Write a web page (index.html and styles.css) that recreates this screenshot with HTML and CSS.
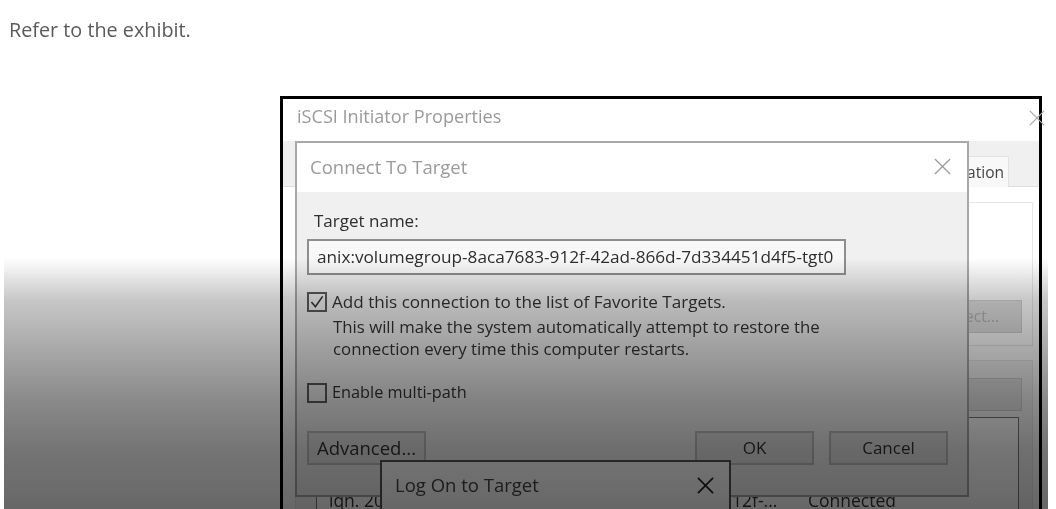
FILE: index.html
```html
<!DOCTYPE html>
<html lang="en">
<head>
    <meta charset="UTF-8">
    <meta name="viewport" content="width=device-width, initial-scale=1.0">
    <title>Refer to the exhibit</title>
    <link rel="stylesheet" href="styles.css">
</head>
<body>
    <p class="prompt">Refer to the exhibit.</p>

    <div class="exhibit">
        <!-- parent window, mostly covered by the dialogs -->
        <div class="window">
            <div class="window-title">iSCSI Initiator Properties</div>
            <svg class="window-x" viewBox="0 0 18 18"><path d="M1 1L17 17M17 1L1 17"/></svg>
            <div class="tabs"><span class="tab">Configuration</span></div>
            <div class="window-body">
                <div class="group group-top">
                    <div class="side-btn side-btn-top">Quick Connect...</div>
                </div>
                <div class="group group-bottom">
                    <div class="side-btn side-btn-low"></div>
                    <div class="target-list">
                        <span class="target-name">iqn. 20</span>
                        <span class="target-id">912f-...</span>
                        <span class="target-state">Connected</span>
                    </div>
                </div>
            </div>
        </div>

        <div class="dialog">
            <div class="dialog-head">
                <span class="dialog-title">Connect To Target</span>
                <svg class="dialog-x" viewBox="0 0 18 18"><path d="M1 1L17 17M17 1L1 17"/></svg>
            </div>
            <div class="dialog-body">
                <label class="field-label">Target name:</label>
                <div class="target-input">anix:volumegroup-8aca7683-912f-42ad-866d-7d334451d4f5-tgt0</div>
                <div class="check-row fav-row">
                    <span class="checkbox">
                        <svg viewBox="0 0 20 20"><path d="M3 10L8 16L17 3"/></svg>
                    </span>
                    <span>Add this connection to the list of Favorite Targets.</span>
                </div>
                <p class="check-note">This will make the system automatically attempt to restore the<br>connection every time this computer restarts.</p>
                <div class="check-row path-row">
                    <span class="checkbox"></span>
                    <span>Enable multi-path</span>
                </div>
                <div class="dialog-buttons">
                    <div class="btn btn-advanced">Advanced...</div>
                    <div class="btn">OK</div>
                    <div class="btn">Cancel</div>
                </div>
            </div>
        </div>

        <div class="logon">
            <span class="logon-title">Log On to Target</span>
            <svg class="logon-x" viewBox="0 0 18 18"><path d="M1 1L17 17M17 1L1 17"/></svg>
        </div>
    </div>

    <div class="shade"></div>
</body>
</html>
```

FILE: styles.css
```css
html, body {
    margin: 0;
    height: 509px;
    overflow: hidden;
    background: #ffffff;
}
body {
    font-family: 'Open Sans', 'Noto Sans', sans-serif;
    position: relative;
    color: #333333;
}
.prompt {
    margin: 0;
    padding: 18px 0 0 9px;
    font-size: 19.800px;
    line-height: 24px;
    color: #5a5a5a;
    filter: blur(0.4px);
}
/* free canvas for the overlapping windows */
.exhibit {
    position: absolute;
    inset: 0;
    overflow: hidden;
    filter: blur(0.6px);
}

/* parent window */
.window {
    position: absolute;
    left: 280px;
    top: 96px;
    width: 756px;
    height: 420px;
    border: 3px solid #000000;
    border-bottom: none;
    background: #ffffff;
}
.window-title {
    height: 42px;
    padding-left: 14px;
    font-size: 18.100px;
    line-height: 34px;
    color: #9a9a9a;
}
.window-x {
    position: absolute;
    right: -6px;
    top: 11px;
    width: 16px;
    height: 16px;
}
.window-x path {
    fill: none;
    stroke: #a8a8a8;
    stroke-width: 1.400;
}
.tabs {
    display: flex;
    justify-content: flex-end;
    height: 46px;
    padding-right: 30px;
    background: #f0f0f0;
    border-bottom: 1px solid #dddddd;
    box-sizing: border-box;
}
.tab {
    margin-top: 15px;
    padding: 0 4px 0 12px;
    width: 100px;
    box-sizing: border-box;
    height: 31px;
    text-align: right;
    background: #f8f8f8;
    border: 1px solid #e2e2e2;
    border-bottom: none;
    font-size: 15.500px;
    line-height: 30px;
    white-space: nowrap;
    overflow: hidden;
    direction: rtl;
    color: #444444;
}
.window-body {
    height: 340px;
    padding: 15px 6px 0 12px;
    background: #ffffff;
}
.group {
    border: 1px solid #e6e6e6;
    display: flex;
    flex-direction: column;
    align-items: flex-end;
}
.group-top {
    height: 144px;
    background: #ffffff;
    padding-right: 10px;
    box-sizing: border-box;
}
.group-bottom {
    margin-top: 14px;
    padding-right: 10px;
    height: 180px;
    background: #f4f4f4;
}
.side-btn {
    width: 300px;
    height: 33px;
    box-sizing: border-box;
    text-align: right;
    font-size: 15.500px;
    line-height: 31px;
    padding-right: 22px;
    background: #e4e4e4;
    border: 1px solid #d0d0d0;
}
.side-btn-top {
    margin-top: 97px;
    color: #b4b4b4;
    background: #e0e0e0;
}
.side-btn-low {
    margin-top: 17px;
}
.target-list {
    align-self: stretch;
    position: relative;
    margin: 6px 3px 0 20px;
    height: 100px;
    border: 1px solid #7a7a7a;
    background: #ffffff;
    font-size: 17.500px;
}
.target-list span {
    position: absolute;
    top: 70px;
}
.target-name { left: 12px; }
.target-id { left: 405px; }
.target-state { left: 491px; }

/* connect to target dialog */
.dialog {
    position: absolute;
    left: 295px;
    top: 141px;
    width: 670px;
    height: 352px;
    border: 2px solid #a8a8a8;
    background: #f0f0f0;
}
.dialog-head {
    display: flex;
    justify-content: space-between;
    align-items: center;
    height: 49px;
    padding: 0 16px 2px 13px;
    box-sizing: border-box;
    background: #ffffff;
}
.dialog-title {
    font-size: 18.500px;
    color: #9a9a9a;
}
.dialog-x {
    width: 17px;
    height: 17px;
}
.dialog-x path {
    fill: none;
    stroke: #9c9c9c;
    stroke-width: 1.400;
}
.dialog-body {
    padding: 17px 0 0 10px;
}
.field-label {
    display: block;
    font-size: 17px;
    line-height: 24px;
    padding-left: 7px;
    color: #2e2e2e;
}
.target-input {
    width: 539px;
    height: 36px;
    box-sizing: border-box;
    margin-top: 6px;
    padding-left: 8px;
    border: 2px solid #8e8e8e;
    background: #f8f8f8;
    font-size: 17.200px;
    line-height: 32px;
    white-space: nowrap;
    overflow: hidden;
    color: #2e2e2e;
}
.check-row {
    display: flex;
    align-items: center;
    gap: 5px;
    font-size: 17.100px;
    line-height: 21px;
}
.fav-row {
    margin-top: 16px;
}
.path-row {
    margin-top: 22px;
    font-size: 16.300px;
}
.checkbox {
    display: block;
    width: 20px;
    height: 20px;
    box-sizing: border-box;
    border: 2px solid #5a5a5a;
    flex: none;
}
.checkbox svg {
    display: block;
    width: 16px;
    height: 16px;
}
.checkbox path {
    fill: none;
    stroke: #333333;
    stroke-width: 2;
}
.check-note {
    margin: 4px 0 0 26px;
    font-size: 16.800px;
    line-height: 22px;
    color: #333333;
}
.dialog-buttons {
    display: flex;
    gap: 15px;
    margin-top: 28px;
    padding-right: 19px;
}
.btn {
    width: 119px;
    height: 34px;
    box-sizing: border-box;
    border: 2px solid #bdbdbd;
    background: #e4e4e4;
    text-align: center;
    font-size: 17px;
    line-height: 30px;
}
.btn-advanced {
    margin-right: auto;
    font-size: 18.500px;
}

/* dialog in front */
.logon {
    position: absolute;
    left: 380px;
    top: 460px;
    width: 351px;
    height: 60px;
    box-sizing: border-box;
    display: flex;
    justify-content: space-between;
    padding: 10px 15px 0 13px;
    background: #ffffff;
    border: 2px solid #555555;
    border-bottom: none;
}
.logon-title {
    font-size: 18.500px;
    line-height: 26px;
    color: #444444;
}
.logon-x {
    width: 17px;
    height: 17px;
    margin-top: 5px;
}
.logon-x path {
    fill: none;
    stroke: #222222;
    stroke-width: 1.800;
}

/* grey fade laid over the lower half of the picture */
.shade {
    position: absolute;
    left: 4px;
    right: 8px;
    top: 258px;
    bottom: 0;
    background: linear-gradient(to bottom,
        rgba(0, 0, 0, 0) 0,
        rgba(0, 0, 0, 0.220) 42px,
        rgba(0, 0, 0, 0.340) 92px,
        rgba(0, 0, 0, 0.460) 142px,
        rgba(0, 0, 0, 0.545) 192px,
        rgba(0, 0, 0, 0.590) 242px,
        rgba(0, 0, 0, 0.600) 251px);
}
```
